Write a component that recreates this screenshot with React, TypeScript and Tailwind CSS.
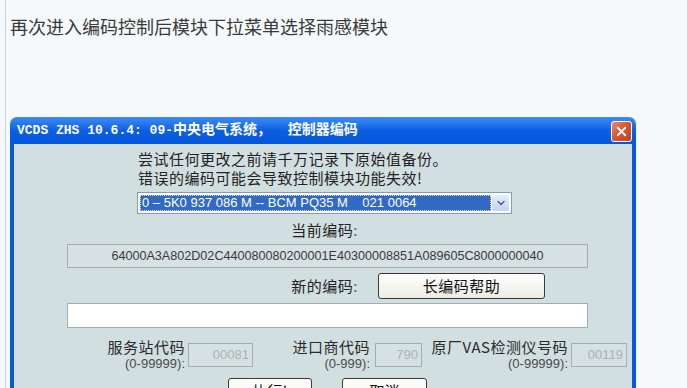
import { ChevronDown, X } from "lucide-react";

const cjk = { fontFamily: '"Noto Sans CJK SC", "Noto Sans", sans-serif' };
const arial = { fontFamily: '"Liberation Sans", Arial, sans-serif' };

function SmallBox({ value, width }: { value: string; width: string }) {
  return (
    <div
      className={`${width} flex h-[24px] items-center justify-end border border-[#a3adad] bg-[#d5e1e2] pr-[3px] text-[13px] text-[#a9b3b3]`}
      style={arial}
    >
      {value}
    </div>
  );
}

function CountLabel({ title, range, width }: { title: string; range: string; width: string }) {
  return (
    <div className={`${width} text-right`}>
      <div className="text-[15px] leading-[17px] tracking-[0.5px] text-[#2a2a2a]">{title}</div>
      <div className="text-[13px] leading-[17px] text-[#4a4a4a]" style={arial}>
        {range}
      </div>
    </div>
  );
}

export default function App() {
  return (
    <div className="h-[388px] w-[687px] overflow-hidden bg-[#f6f9fc] pl-[5px]" style={cjk}>
      <div className="h-full border-l border-[#c3d8e8] pl-[4px]">
        <p className="pt-[14px] text-[18px] leading-[24px] text-[#3a3a3a]">
          再次进入编码控制后模块下拉菜单选择雨感模块
        </p>

        <div className="mt-[79px] w-[626px]">
          {/* title bar */}
          <div className="flex h-[27px] items-center justify-between rounded-t-[7px] bg-gradient-to-b from-[#3f8cf6] via-[#0a5fe2] to-[#0656dc] pl-[7px] pr-[4px]">
            <span
              className="text-[13px] font-bold text-white"
              style={{ fontFamily: '"Liberation Mono", "Noto Sans CJK SC", monospace' }}
            >
              VCDS ZHS 10.6.4: 09-<span className="text-[14px]">中央电气系统，&nbsp;&nbsp;控制器编码</span>
            </span>
            <div className="mt-[2px] flex h-[21px] w-[21px] items-center justify-center rounded-[3px] border border-white bg-gradient-to-br from-[#e98a68] via-[#d4542f] to-[#c4421f]">
              <X className="h-[15px] w-[15px] text-white" strokeWidth={3} />
            </div>
          </div>

          {/* body */}
          <div className="h-[250px] border-x-4 border-[#0c56d8] bg-[#d2dfe0] pt-[5px]">
            <div className="pl-[124px] text-[15px] leading-[19px] tracking-[0.5px] text-[#222]">
              <div>尝试任何更改之前请千万记录下原始值备份。</div>
              <div>错误的编码可能会导致控制模块功能失效!</div>
            </div>

            <div className="ml-[123px] mt-[5px] flex h-[22px] w-[375px] border border-[#7f9db9] bg-white p-[2px]">
              <div
                className="flex flex-1 items-center border border-dotted border-[#f0e08a] bg-[#316ac5] pl-[1px] text-[13px] text-white"
                style={arial}
              >
                0 – 5K0 937 086 M -- BCM PQ35 M&nbsp;&nbsp;&nbsp;&nbsp;021 0064
              </div>
              <div className="ml-[1px] flex w-[17px] items-center justify-center rounded-[2px] bg-gradient-to-b from-[#e6eefc] to-[#c3d3f5]">
                <ChevronDown className="h-[12px] w-[12px] text-[#4d6185]" strokeWidth={3} />
              </div>
            </div>

            <div className="mt-[7px] w-[344px] text-right text-[15px] leading-[18px] tracking-[0.5px] text-[#222]">
              当前编码<span className="text-[#666]">:</span>
            </div>

            <div
              className="ml-[53px] mt-[5px] flex h-[24px] w-[521px] items-center justify-center border border-[#a3adad] bg-[#d5e1e2] text-[12.6px] text-[#3a3a3a]"
              style={arial}
            >
              64000A3A802D02C440080080200001E40300008851A089605C8000000040
            </div>

            <div className="mt-[5px] flex items-center">
              <div className="w-[344px] text-right text-[15px] leading-[18px] tracking-[0.5px] text-[#222]">
                新的编码<span className="text-[#666]">:</span>
              </div>
              <button className="ml-[20px] h-[26px] w-[167px] rounded-[3px] border border-[#3a3a3a] bg-gradient-to-b from-white to-[#ecece4] text-[15px] tracking-[0.5px] text-[#111]">
                长编码帮助
              </button>
            </div>

            <div className="ml-[53px] mt-[4px] h-[25px] w-[521px] border border-[#a3adad] bg-white" />

            <div className="mt-[10px] flex items-center">
              <CountLabel title="服务站代码" range="(0-99999):" width="w-[171px]" />
              <div className="ml-[3px]">
                <SmallBox value="00081" width="w-[65px]" />
              </div>
              <CountLabel title="进口商代码" range="(0-999):" width="w-[117px]" />
              <div className="ml-[5px]">
                <SmallBox value="790" width="w-[47px]" />
              </div>
              <CountLabel title="原厂VAS检测仪号码" range="(0-99999):" width="w-[146px]" />
              <div className="ml-[3px]">
                <SmallBox value="00119" width="w-[56px]" />
              </div>
            </div>

            <div className="mt-[6px] flex">
              <button className="ml-[214px] h-[26px] w-[84px] rounded-[3px] border border-[#3a3a3a] bg-gradient-to-b from-white to-[#ecece4] text-[15px] text-[#111]">
                执行!
              </button>
              <button className="ml-[30px] h-[26px] w-[85px] rounded-[3px] border border-[#3a3a3a] bg-gradient-to-b from-white to-[#ecece4] text-[15px] text-[#111]">
                取消
              </button>
            </div>
          </div>
        </div>
      </div>
    </div>
  );
}
